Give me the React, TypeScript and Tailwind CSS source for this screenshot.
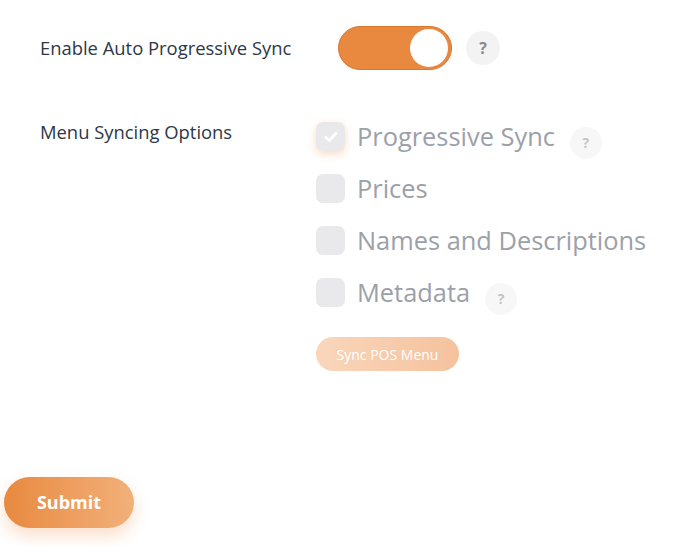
import { useState } from "react";

type Option = { key: string; label: string; help?: boolean };

const options: Option[] = [
  { key: "progressive", label: "Progressive Sync", help: true },
  { key: "prices", label: "Prices" },
  { key: "names", label: "Names and Descriptions" },
  { key: "metadata", label: "Metadata", help: true },
];

function HelpBadge({ faded = false }: { faded?: boolean }) {
  return (
    <span
      className={
        faded
          ? "flex h-[32px] w-[32px] items-center justify-center rounded-full bg-[#f7f7f7] text-[14px] font-bold text-[#c4c4c4]"
          : "flex h-[34px] w-[34px] items-center justify-center rounded-full bg-[#f3f3f3] text-[16px] font-bold text-[#8a8a8a]"
      }
    >
      ?
    </span>
  );
}

function CheckBox({ checked }: { checked: boolean }) {
  return (
    <span
      className={
        "flex h-[29px] w-[29px] shrink-0 items-center justify-center rounded-[7px] bg-[#e9e9eb]" +
        (checked ? " shadow-[0_3px_8px_rgba(240,150,80,0.35)]" : "")
      }
    >
      {checked && (
        <svg width="16" height="16" viewBox="0 0 16 16" fill="none">
          <path
            d="M3 8.5l3.2 3L13 4.5"
            stroke="white"
            strokeWidth="2.8"
            strokeLinecap="round"
            strokeLinejoin="round"
          />
        </svg>
      )}
    </span>
  );
}

export default function App() {
  const [autoSync, setAutoSync] = useState(true);
  const [checked] = useState<Record<string, boolean>>({ progressive: true });

  return (
    <div className="min-h-screen w-full bg-white font-['Open_Sans',sans-serif]">
      <div className="pl-[40px] pt-[26px]">
        {/* Auto sync toggle */}
        <div className="flex items-center">
          <span className="w-[298px] text-[18.4px] text-[#2d3748]">
            Enable Auto Progressive Sync
          </span>
          <button
            type="button"
            onClick={() => setAutoSync(!autoSync)}
            className="flex h-[44px] w-[114px] items-center rounded-full border border-[#d9782f] bg-[#e8893f] px-[3px]"
          >
            <span
              className={
                "h-[38px] w-[38px] rounded-full bg-white " +
                (autoSync ? "ml-auto" : "")
              }
            />
          </button>
          <span className="ml-[14px]">
            <HelpBadge />
          </span>
        </div>

        {/* Menu syncing options */}
        <div className="mt-[52px] flex">
          <span className="-mt-[4px] w-[276px] text-[18.4px] text-[#2d3748]">
            Menu Syncing Options
          </span>
          <div className="flex flex-col">
            <div className="flex flex-col gap-[23px]">
              {options.map((o) => (
                <div key={o.key} className="flex h-[29px] items-center">
                  <CheckBox checked={!!checked[o.key]} />
                  <span className="ml-[12px] text-[25.4px] leading-none text-[#9ca0a8]">
                    {o.label}
                  </span>
                  {o.help && (
                    <span className="ml-[15px] mt-[12px]">
                      <HelpBadge faded />
                    </span>
                  )}
                </div>
              ))}
            </div>
            <button
              type="button"
              className="mt-[30px] h-[34px] w-[143px] rounded-full bg-gradient-to-r from-[#f9d6bb] to-[#f5c29d] text-[14px] text-white"
            >
              Sync POS Menu
            </button>
          </div>
        </div>
      </div>

      <div className="pl-[4px] pt-[106px]">
        <button
          type="button"
          className="h-[51px] w-[130px] rounded-full bg-gradient-to-r from-[#e8893f] to-[#f2b079] text-[18px] font-bold text-white shadow-[0_8px_16px_rgba(240,150,80,0.3)]"
        >
          Submit
        </button>
      </div>
    </div>
  );
}
